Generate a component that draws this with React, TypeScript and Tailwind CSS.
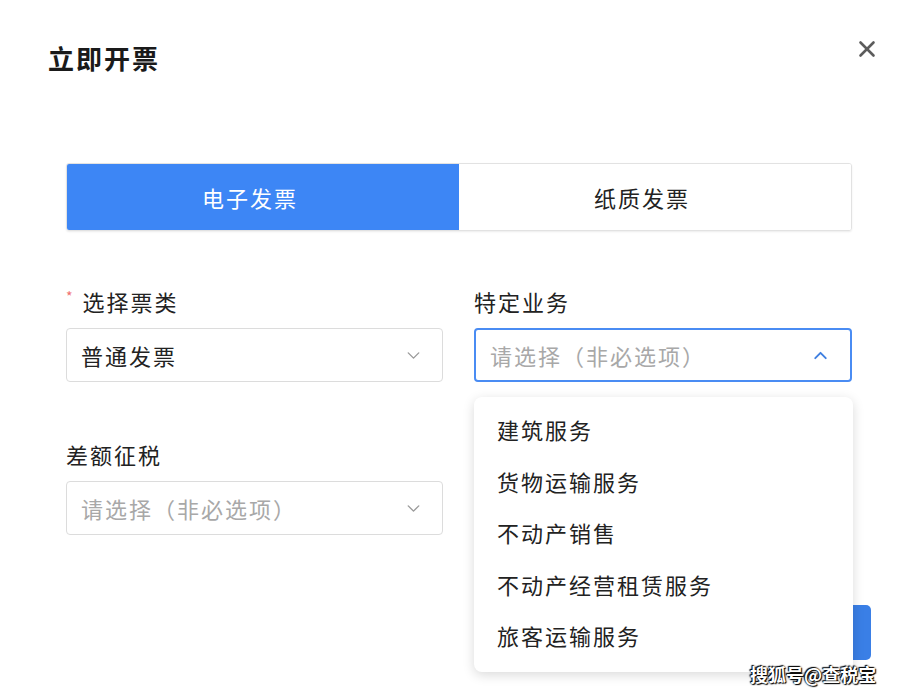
import { ChevronDown, ChevronUp, X } from 'lucide-react';

const FONT = { fontFamily: '"Noto Sans CJK SC", "Noto Sans", sans-serif' };

const OPTIONS = ['建筑服务', '货物运输服务', '不动产销售', '不动产经营租赁服务', '旅客运输服务'];

function Select({
  value,
  placeholder,
  open,
}: {
  value?: string;
  placeholder?: string;
  open?: boolean;
}) {
  return (
    <div
      className={`flex h-[54px] items-center justify-between rounded-[4px] border bg-white pl-[14px] ${
        open ? 'border-2 border-[#4a8cf3] pl-[13px] pr-[19px]' : 'border-[#dcdcdc] pr-[18px]'
      }`}
    >
      <span
        className={`text-[22px] tracking-[2px] ${value ? 'text-[#222]' : 'text-[#a8a8a8]'}`}
      >
        {value ?? placeholder}
      </span>
      {open ? (
        <ChevronUp size={21} strokeWidth={2.2} className="text-[#3f7fe0]" />
      ) : (
        <ChevronDown size={21} strokeWidth={1.6} className="text-[#9a9a9a]" />
      )}
    </div>
  );
}

export default function App() {
  return (
    <div className="relative h-[694px] w-[900px] overflow-hidden bg-white" style={FONT}>
      <div className="flex items-start justify-between pl-[48px] pr-[20px] pt-[42px]">
        <h1 className="text-[26px] font-bold leading-[32px] tracking-[2px] text-[#1a1a1a]">
          立即开票
        </h1>
        <X size={26} strokeWidth={2.4} className="-mt-[6px] text-[#5c5c5c]" />
      </div>

      <div className="ml-[66px] mr-[48px] mt-[89px] flex h-[68px] overflow-hidden rounded-[3px] border border-[#e2e2e2] shadow-[0_1px_2px_rgba(0,0,0,0.08)]">
        <div className="flex flex-1 items-center justify-center bg-[#3d86f5] pr-[26px] text-[22px] tracking-[2px] text-white">
          电子发票
        </div>
        <div className="flex flex-1 items-center justify-center bg-white pr-[26px] text-[22px] tracking-[2px] text-[#222]">
          纸质发票
        </div>
      </div>

      <div className="ml-[66px] mr-[48px] mt-[55px] grid grid-cols-[377px_378px] gap-x-[31px] gap-y-[57px]">
        <div>
          <div className="mb-[12px] flex h-[30px] items-center text-[22px] tracking-[2px] text-[#222]">
            <span className="-mt-[10px] mr-[8px] text-[14px] text-[#f07070]">*</span>
            选择票类
          </div>
          <Select value="普通发票" />
        </div>
        <div>
          <div className="mb-[12px] flex h-[30px] items-center text-[22px] tracking-[2px] text-[#222]">
            特定业务
          </div>
          <Select placeholder="请选择（非必选项）" open />
        </div>
        <div>
          <div className="mb-[12px] flex h-[30px] items-center text-[22px] tracking-[2px] text-[#222]">
            差额征税
          </div>
          <Select placeholder="请选择（非必选项）" />
        </div>
      </div>

      <div className="mt-[70px] flex justify-end pr-[29px]">
        <button className="h-[55px] w-[130px] rounded-[5px] bg-[#3a7fe6] text-[20px] text-white">
          确定
        </button>
      </div>

      <div className="absolute left-[474px] top-[397px] h-[275px] w-[379px] rounded-[8px] bg-white pt-[7px] shadow-[0_3px_12px_rgba(0,0,0,0.15)]">
        {OPTIONS.map((o) => (
          <div
            key={o}
            className="flex h-[51.5px] items-center pl-[23px] text-[22px] tracking-[2px] text-[#222]"
          >
            {o}
          </div>
        ))}
      </div>

      <div className="absolute left-[750px] top-[661px] text-[18px] font-bold text-white [text-shadow:0_0_2px_#000,1px_1px_1px_#000,-1px_-1px_1px_#000]">
        搜狐号@查税宝
      </div>
    </div>
  );
}
